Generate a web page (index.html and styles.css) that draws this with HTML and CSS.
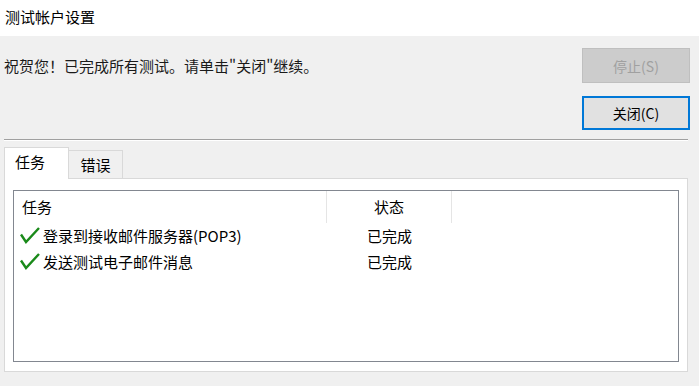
FILE: index.html
```html
<!DOCTYPE html>
<html lang="zh-CN">
<head>
<meta charset="utf-8">
<title>测试帐户设置</title>
<link rel="stylesheet" href="styles.css">
</head>
<body>
<div class="titlebar">测试帐户设置</div>
<div class="top">
  <div class="message">祝贺您！已完成所有测试。请单击"关闭"继续。</div>
  <div class="buttons">
    <button class="btn btn-disabled" disabled>停止(S)</button>
    <button class="btn btn-default">关闭(C)</button>
  </div>
</div>
<div class="separator"></div>
<div class="tabs">
  <div class="tab tab-active">任务</div>
  <div class="tab">错误</div>
</div>
<div class="panel">
  <div class="list">
    <div class="list-header">
      <div class="col col-task">任务</div>
      <div class="col col-status">状态</div>
      <div class="col col-rest"></div>
    </div>
    <div class="row">
      <div class="col col-task">
        <svg class="check" width="20" height="17" viewBox="0 0 20 17"><path d="M1 7.5 L6 15 L19 1" fill="none" stroke="#1a8a1a" stroke-width="2.4"/></svg>
        <span>登录到接收邮件服务器(POP3)</span>
      </div>
      <div class="col col-status">已完成</div>
    </div>
    <div class="row">
      <div class="col col-task">
        <svg class="check" width="20" height="17" viewBox="0 0 20 17"><path d="M1 7.5 L6 15 L19 1" fill="none" stroke="#1a8a1a" stroke-width="2.4"/></svg>
        <span>发送测试电子邮件消息</span>
      </div>
      <div class="col col-status">已完成</div>
    </div>
  </div>
</div>
</body>
</html>
```
FILE: styles.css
```css
* { box-sizing: border-box; }
html, body {
  margin: 0;
  padding: 0;
  width: 699px;
  height: 386px;
  overflow: hidden;
}
body {
  background: #f0f0f0;
  font-family: "Noto Sans CJK SC", "Noto Sans", sans-serif;
  font-size: 15px;
  color: #000;
}
.titlebar {
  height: 36px;
  background: #fff;
  padding-left: 5px;
  line-height: 34px;
  font-size: 15px;
}
.top {
  display: flex;
  justify-content: space-between;
  padding: 12px 9px 0 4px;
}
.message {
  padding-top: 8px;
  line-height: 20px;
  color: #1a1a1a;
}
.buttons {
  display: flex;
  flex-direction: column;
  gap: 13px;
}
.btn {
  width: 108px;
  height: 35px;
  font-family: inherit;
  font-size: 14px;
  margin: 0;
  padding: 0;
}
.btn-disabled {
  background: #cccccc;
  border: 1px solid #bfbfbf;
  color: #a0a0a0;
}
.btn-default {
  background: #e1e1e1;
  border: 2px solid #0078d7;
  color: #000;
  height: 34px;
}
.separator {
  margin: 9px 11px 0 4px;
  border-top: 1px solid #a0a0a0;
  border-bottom: 1px solid #fff;
}
.tabs {
  display: flex;
  align-items: flex-end;
  margin: 6px 0 0 4px;
  position: relative;
  z-index: 1;
  height: 31px;
}
.tab {
  height: 28px;
  padding: 0 10px;
  line-height: 28px;
  border: 1px solid #d9d9d9;
  border-bottom: none;
  background: #f0f0f0;
  width: 55px;
  text-align: center;
  margin-left: -1px;
}
.tab-active {
  height: 32px;
  margin-bottom: -1px;
  width: 65px;
  margin-left: 0;
  background: #fff;
  line-height: 28px;
  text-align: left;
  padding-left: 10px;
}
.panel {
  margin: 0 11px 0 4px;
  height: 194px;
  background: #fff;
  border: 1px solid #d9d9d9;
  padding: 11px 8px 9px 8px;
}
.list {
  height: 172px;
  border: 1px solid #828790;
  background: #fff;
}
.list-header {
  display: flex;
  height: 32px;
  align-items: stretch;
}
.list-header .col {
  line-height: 30px;
  padding-top: 1px;
}
.col-task {
  width: 313px;
  padding-left: 8px;
  display: flex;
  align-items: center;
}
.list-header .col-task {
  display: block;
  border-right: 1px solid #e5e5e5;
}
.col-status {
  width: 125px;
  text-align: center;
}
.list-header .col-status {
  border-right: 1px solid #e5e5e5;
}
.col-rest { flex: 1; }
.row {
  display: flex;
  height: 26px;
  line-height: 26px;
}
.row .col-task { padding-left: 6px; }
.check {
  display: block;
  margin-right: 3px;
  margin-top: -2px;
}
```
